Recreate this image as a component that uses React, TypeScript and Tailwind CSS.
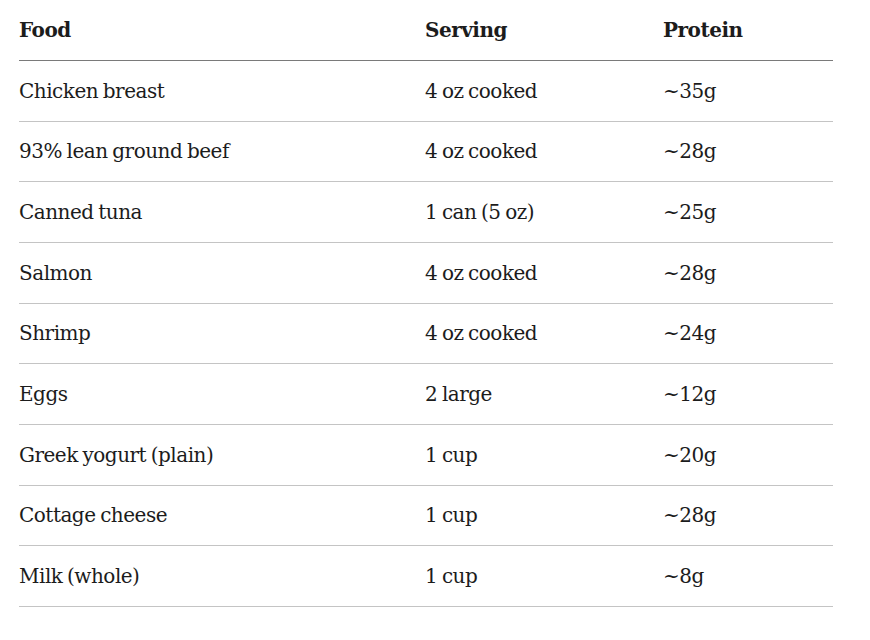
import React from "react";

const rows: [string, string, string][] = [
  ["Chicken breast", "4 oz cooked", "~35g"],
  ["93% lean ground beef", "4 oz cooked", "~28g"],
  ["Canned tuna", "1 can (5 oz)", "~25g"],
  ["Salmon", "4 oz cooked", "~28g"],
  ["Shrimp", "4 oz cooked", "~24g"],
  ["Eggs", "2 large", "~12g"],
  ["Greek yogurt (plain)", "1 cup", "~20g"],
  ["Cottage cheese", "1 cup", "~28g"],
  ["Milk (whole)", "1 cup", "~8g"],
];

export default function App() {
  return (
    <div className="w-[870px] h-[640px] bg-white text-[#1c1c1c] font-['DejaVu_Serif',_serif] text-[20px] tracking-[-0.025em] [word-spacing:-0.06em]">
      <div className="ml-[19px] w-[814px] flex flex-col">
        <div className="grid grid-cols-[406px_238px_1fr] items-center h-[61px] border-b border-[#7a7a7a] font-bold pb-[1px]">
          <div>Food</div>
          <div>Serving</div>
          <div>Protein</div>
        </div>
        {rows.map((r) => (
          <div
            key={r[0]}
            className="grid grid-cols-[406px_238px_1fr] items-center h-[60.67px] border-b border-[#c4c4c4]"
          >
            <div>{r[0]}</div>
            <div>{r[1]}</div>
            <div>{r[2]}</div>
          </div>
        ))}
      </div>
    </div>
  );
}
